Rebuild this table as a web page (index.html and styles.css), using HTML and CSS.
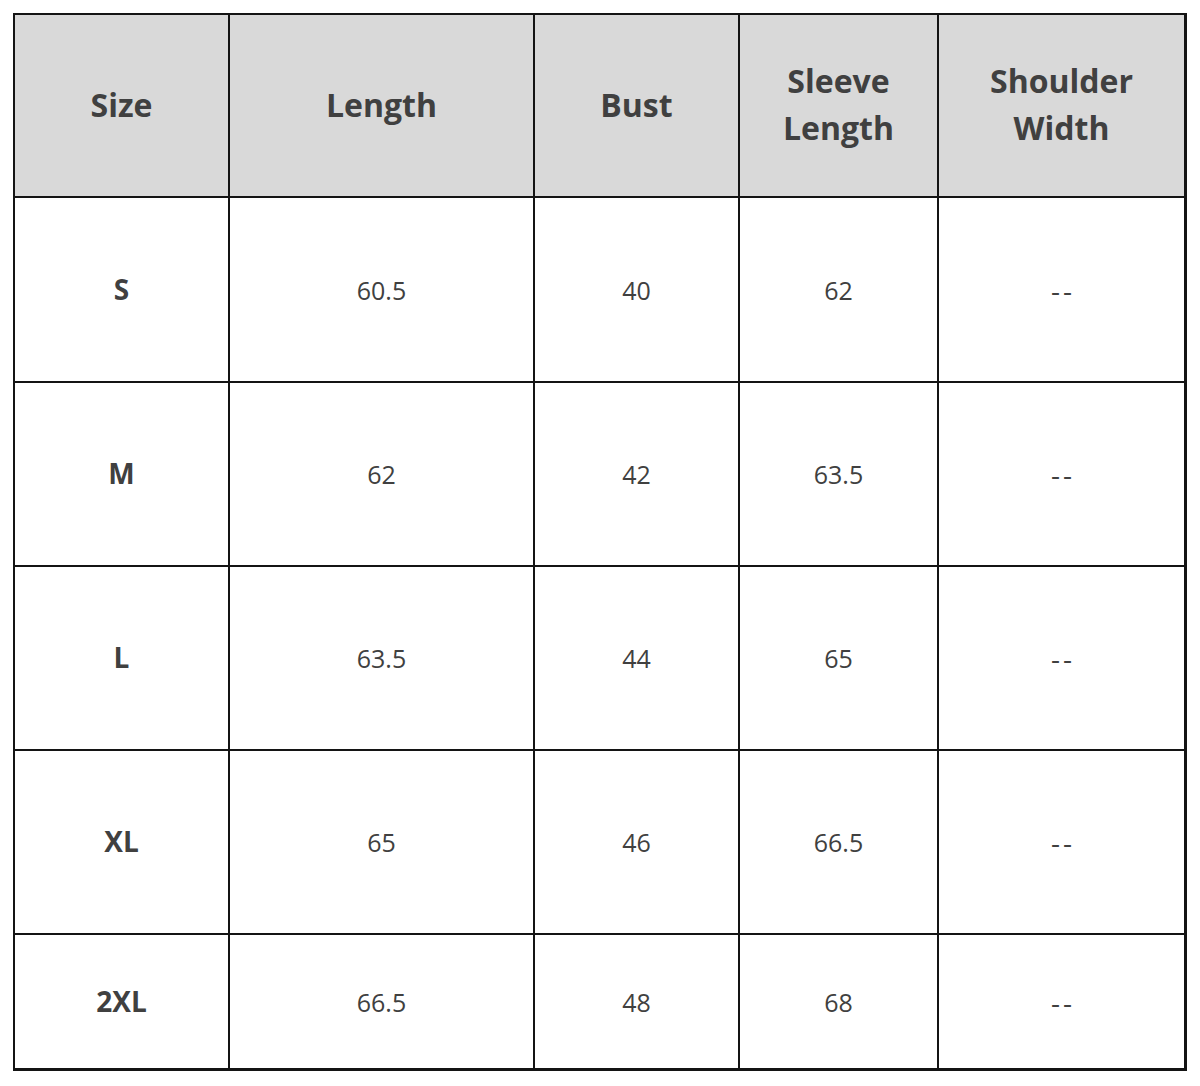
FILE: index.html
```html
<!DOCTYPE html>
<html>
<head>
<meta charset="utf-8">
<link rel="stylesheet" href="styles.css">
</head>
<body>
<div class="chart">
  <div class="cell head">Size</div>
  <div class="cell head">Length</div>
  <div class="cell head">Bust</div>
  <div class="cell head">Sleeve<br>Length</div>
  <div class="cell head">Shoulder<br>Width</div>

  <div class="cell size">S</div>
  <div class="cell">60.5</div>
  <div class="cell">40</div>
  <div class="cell">62</div>
  <div class="cell dash">--</div>

  <div class="cell size">M</div>
  <div class="cell">62</div>
  <div class="cell">42</div>
  <div class="cell">63.5</div>
  <div class="cell dash">--</div>

  <div class="cell size">L</div>
  <div class="cell">63.5</div>
  <div class="cell">44</div>
  <div class="cell">65</div>
  <div class="cell dash">--</div>

  <div class="cell size">XL</div>
  <div class="cell">65</div>
  <div class="cell">46</div>
  <div class="cell">66.5</div>
  <div class="cell dash">--</div>

  <div class="cell size">2XL</div>
  <div class="cell">66.5</div>
  <div class="cell">48</div>
  <div class="cell">68</div>
  <div class="cell dash">--</div>
</div>
</body>
</html>
```

FILE: styles.css
```css
html, body {
  margin: 0;
  padding: 0;
  background: #ffffff;
}

body {
  font-family: "Open Sans", "Liberation Sans", sans-serif;
  color: #404040;
}

.chart {
  display: inline-grid;
  margin: 13px 0 0 13px;
  grid-template-columns: 213px 303px 203px 197px 245px;
  grid-template-rows: 181px 183px 182px 182px 182px 133px;
  gap: 2px;
  background: #141414;
  padding: 2px 3px 3px 2px;
}

.cell {
  background: #ffffff;
  display: flex;
  align-items: center;
  justify-content: center;
  text-align: center;
  font-size: 25px;
  line-height: 1.2;
}

.head {
  background: #d9d9d9;
  font-weight: 700;
  font-size: 32px;
  line-height: 47px;
  padding-bottom: 3px;
}

.size {
  font-weight: 700;
  font-size: 28px;
}

.dash {
  font-size: 28px;
  letter-spacing: 3px;
  padding: 2px 0 0 3px;
}
```
